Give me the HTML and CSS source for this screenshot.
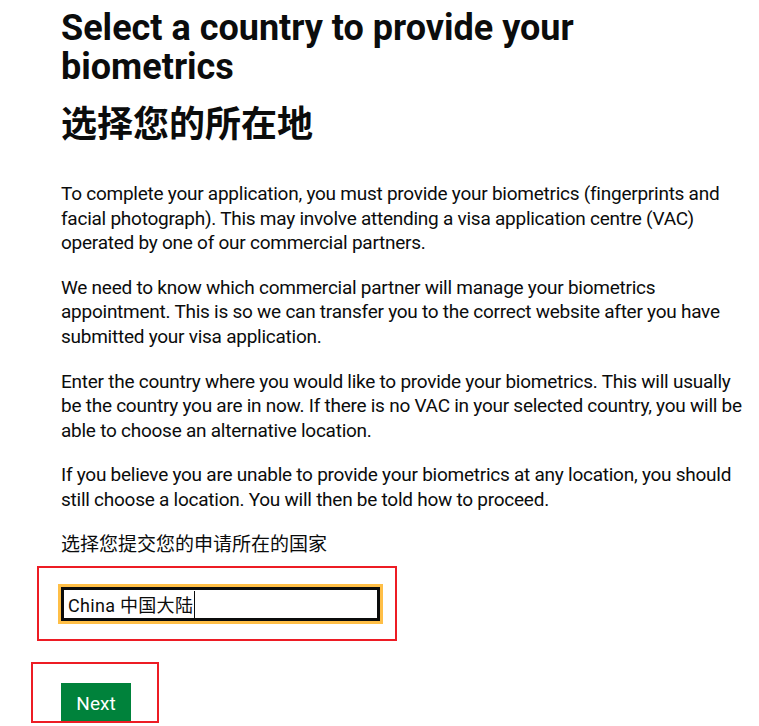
FILE: index.html
```html
<!DOCTYPE html>
<html lang="en">
<head>
  <meta charset="UTF-8" />
  <meta name="viewport" content="width=device-width, initial-scale=1" />
  <title>Select a country to provide your biometrics</title>
  <link rel="stylesheet" href="styles.css">
</head>
<body>
<main class="page">
  <h1 class="heading">
    Select a country to provide your biometrics
    <span class="heading-zh" lang="zh-CN">选择您的所在地</span>
  </h1>

  <p>To complete your application, you must provide your biometrics (fingerprints and facial photograph). This may involve attending a visa application centre (VAC) operated by one of our commercial partners.</p>
  <p>We need to know which commercial partner will manage your biometrics appointment. This is so we can transfer you to the correct website after you have submitted your visa application.</p>
  <p>Enter the country where you would like to provide your biometrics. This will usually be the country you are in now. If there is no VAC in your selected country, you will be able to choose an alternative location.</p>
  <p>If you believe you are unable to provide your biometrics at any location, you should still choose a location. You will then be told how to proceed.</p>

  <label class="label" for="country" lang="zh-CN">选择您提交您的申请所在的国家</label>

  <!-- marked area: country field -->
  <div class="mark mark-field">
    <span class="field">
      <input id="country" class="input input--focus" type="text" value="China 中国大陆" />
    </span>
  </div>

  <!-- marked area: submit -->
  <div class="mark mark-button">
    <button class="button" type="submit">Next</button>
  </div>
</main>
</body>
</html>
```
FILE: styles.css
```css
body {
  margin: 0;
  font-family: Roboto, "Noto Sans CJK SC", sans-serif;
  color: #0b0c0c;
  background: #fff;
}
.page {
  width: 688px;
  padding-left: 61px;
}
.heading {
  font-size: 36px;
  line-height: 39px;
  font-weight: bold;
  margin: 9px 0 37px;
}
.heading-zh {
  display: block;
  margin-top: 18px;
  line-height: 40px;
}
p, .label {
  font-size: 19px;
  line-height: 24.6px;
  letter-spacing: -0.25px;
  margin: 0 0 20px;
}
.label {
  display: block;
  letter-spacing: 0;
  margin-bottom: 9px;
}
.mark {
  border: 2px solid #ed1c24;
  box-sizing: border-box;
}
.mark-field {
  width: 360px;
  margin-left: -24px;
  padding: 19px 15px 18px 22px;
}
.field {
  position: relative;
  display: block;
  width: 319px;
}
/* text caret of the focused field */
.field::after {
  content: "";
  position: absolute;
  left: 133px;
  top: 4px;
  width: 1px;
  height: 27px;
  background: #0b0c0c;
}
.input {
  display: block;
  box-sizing: border-box;
  width: 319px;
  height: 34px;
  padding: 0 4px;
  border: 3px solid #0b0c0c;
  border-radius: 0;
  font-family: Roboto, "Noto Sans CJK SC", sans-serif;
  font-size: 18px;
  letter-spacing: 0.3px;
  color: #0b0c0c;
  background: #fff;
}
.input--focus, .input:focus {
  outline: 3px solid #ffbf47;
  outline-offset: 0;
}
.mark-button {
  width: 128px;
  height: 61px;
  margin: 21px 0 0 -30px;
  padding: 19px 26px 0 28px;
}
.button {
  display: block;
  width: 70px;
  height: 38px;
  padding: 2px 0 0;
  border: 0;
  border-radius: 0;
  background: #00823b;
  color: #fff;
  font-family: Roboto, sans-serif;
  font-size: 19px;
  cursor: pointer;
}
```
